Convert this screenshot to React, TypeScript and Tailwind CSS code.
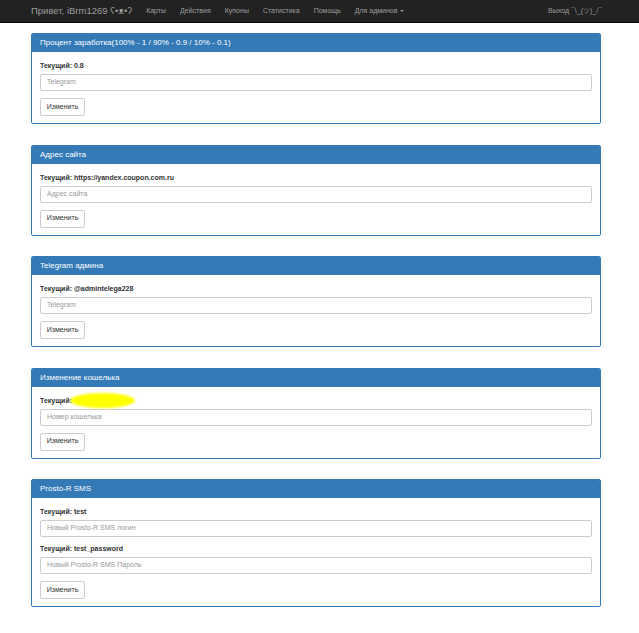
import React from "react";

const font = { fontFamily: '"Liberation Sans", Arial, sans-serif' };

function Field({ label, placeholder, blur }: { label: React.ReactNode; placeholder: string; blur?: boolean }) {
  return (
    <div className="mb-[7px]">
      <div className="h-[10px] mb-[3px] text-[7px] leading-[10px] font-bold text-[#333] flex items-center">
        {label}
        {blur && <span className="inline-block w-[65px] h-[15px] rounded-[50%] bg-[#ffff00] blur-[1px] -ml-[2px]" />}
      </div>
      <div className="h-[17px] border border-[#ccc] rounded-[2px] flex items-center px-[6px] text-[7px] text-[#999]">
        {placeholder}
      </div>
    </div>
  );
}

function Panel({ title, children }: { title: string; children: React.ReactNode }) {
  return (
    <div className="border border-[#337ab7] rounded-[2px] overflow-hidden">
      <div className="h-[18px] bg-[#337ab7] text-white text-[8px] flex items-center pl-[8px]">{title}</div>
      <div className="pt-[9px] pb-[7px] px-[8px]">
        {children}
        <div className="h-[18px] w-[45px] border border-[#ccc] rounded-[2px] flex items-center justify-center text-[7px] text-[#333]">
          Изменить
        </div>
      </div>
    </div>
  );
}

export default function App() {
  const links = ["Карты", "Действия", "Купоны", "Статистика", "Помощь"];
  return (
    <div className="min-h-[633px] bg-white" style={font}>
      <div className="h-[23px] bg-[#222] border-b border-[#080808] flex items-center pl-[31px] pr-[37px]">
        <span className="text-[9.5px] text-[#9d9d9d] mr-[14px]">Привет, iBrm1269 ʕ•ᴥ•ʔ</span>
        <div className="flex gap-[14px] text-[7px] text-[#9d9d9d]">
          {links.map((l) => (
            <span key={l}>{l}</span>
          ))}
          <span className="flex items-center">
            Для админов
            <span className="ml-[3px] inline-block w-0 h-0 border-l-[2px] border-r-[2px] border-t-[2px] border-l-transparent border-r-transparent border-t-[#9d9d9d]" />
          </span>
        </div>
        <span className="ml-auto text-[7px] text-[#9d9d9d]">Выход ¯\_(ツ)_/¯</span>
      </div>
      <div className="w-[570px] ml-[31px] pt-[10px] flex flex-col gap-[20.5px]">
        <Panel title="Процент заработка(100% - 1 / 90% - 0.9 / 10% - 0.1)">
          <Field label="Текущий: 0.8" placeholder="Telegram" />
        </Panel>
        <Panel title="Адрес сайта">
          <Field label="Текущий: https://yandex.coupon.com.ru" placeholder="Адрес сайта" />
        </Panel>
        <Panel title="Telegram админа">
          <Field label="Текущий: @admintelega228" placeholder="Telegram" />
        </Panel>
        <Panel title="Изменение кошелька">
          <Field label="Текущий:" placeholder="Номер кошелька" blur />
        </Panel>
        <Panel title="Prosto-R SMS">
          <Field label="Текущий: test" placeholder="Новый Prosto-R SMS логин" />
          <Field label="Текущий: test_password" placeholder="Новый Prosto-R SMS Пароль" />
        </Panel>
      </div>
    </div>
  );
}
